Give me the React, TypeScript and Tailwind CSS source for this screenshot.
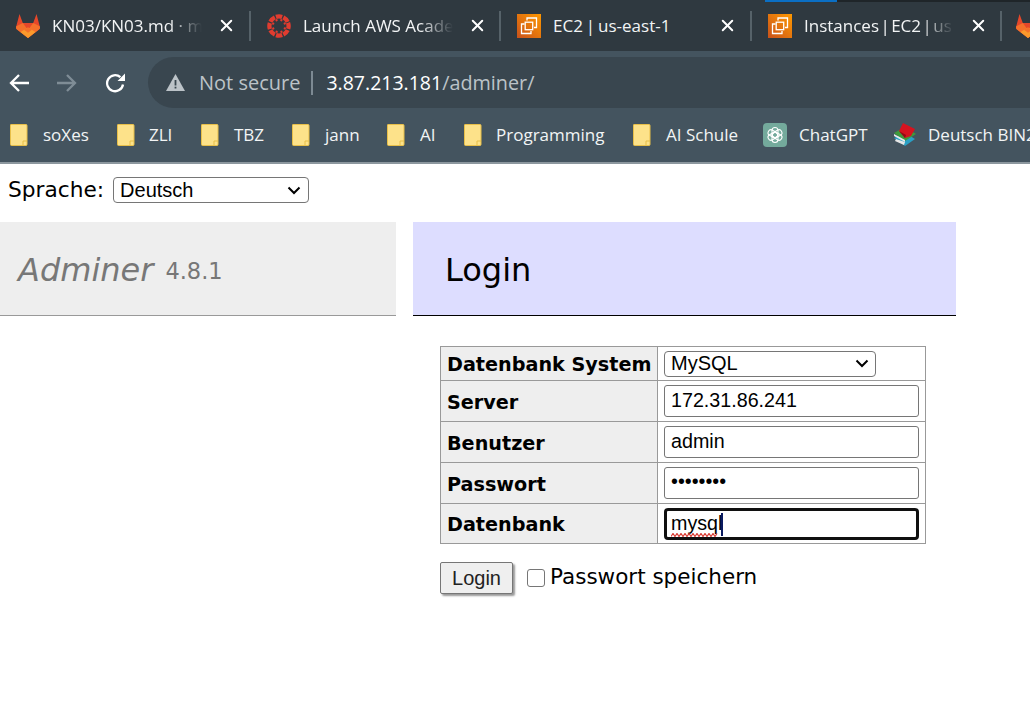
import { X } from "lucide-react";
import { ReactNode } from "react";

function GitlabIcon() {
  return (
    <svg width="24" height="24" viewBox="0 0 24 24" className="shrink-0">
      <path d="M12 24 1 15.600C0 14.800-.2 13.800.2 12.600L3.500 0l3.300 9h10.400l3.300-9 3.300 12.600c.4 1.200.2 2.200-.8 3z" fill="#e5472a" />
      <path d="M.3 12.200 6.800 9 12 16l5.200-7 6.500 3.200.1.400c.4 1.200.2 2.200-.8 3L12 24 1 15.600C0 14.800-.2 13.800.2 12.600z" fill="#f4702b" />
      <path d="M4.500 18 12 13.500 19.500 18 12 24z" fill="#fb9a2c" />
      <path d="M8 15.800 12 13.500l4 2.300-4 3z" fill="#f4702b" />
    </svg>
  );
}

function CanvasIcon() {
  const dots = [0, 45, 90, 135, 180, 225, 270, 315];
  return (
    <svg width="24" height="24" viewBox="0 0 25 25" className="shrink-0">
      <circle cx="12.500" cy="12.500" r="10" fill="none" stroke="#e13c2f" strokeWidth="4.500" strokeDasharray="6.500 1.350" transform="rotate(-20 12.500 12.500)" />
      {dots.map((a) => (
        <circle key={a} cx="12.500" cy="6" r="1.200" fill="#e13c2f" transform={`rotate(${a + 22} 12.500 12.500)`} />
      ))}
    </svg>
  );
}

function Ec2Icon({ id }: { id: string }) {
  return (
    <svg width="24" height="24" viewBox="0 0 24 24" className="shrink-0">
      <defs>
        <linearGradient id={id} x1="0" y1="1" x2="1" y2="0">
          <stop offset="0" stopColor="#c8511b" />
          <stop offset="1" stopColor="#ff9900" />
        </linearGradient>
      </defs>
      <rect width="24" height="24" fill={`url(#${id})`} />
      <g fill="none" stroke="#fff" strokeWidth="1.300">
        <path d="M10 6.500V4h9.500v9.500H17" />
        <path d="M7.500 10H4.500v9.500H14V17" />
        <rect x="8.200" y="8.200" width="7.500" height="7.500" />
      </g>
    </svg>
  );
}

function ChatGptIcon() {
  return (
    <svg width="24" height="24" viewBox="0 0 24 24" className="shrink-0">
      <rect width="24" height="24" rx="4" fill="#74aa9c" />
      <g fill="none" stroke="#fff" strokeWidth="1.100">
        {[0, 60, 120, 180, 240, 300].map((a) => (
          <rect key={a} x="9" y="4.500" width="6" height="10" rx="3" transform={`rotate(${a} 12 12)`} />
        ))}
      </g>
    </svg>
  );
}

function BooksIcon() {
  return (
    <svg width="24" height="24" viewBox="0 0 24 24" className="shrink-0">
      <path d="M1 15 12 10l10 6-10 7z" fill="#2a9fc4" />
      <path d="M2 18l9 4 1-3-9-3z" fill="#e6e6e6" />
      <path d="M1 10 12 4l11 7-11 7z" fill="#3f9a3a" />
      <path d="M1 11l11 6v2L1 13z" fill="#e8e8e8" />
      <path d="M6 8 10 0l12 6-4 7-6 2z" fill="#d5131f" />
      <path d="M6 8l6 7 1-3z" fill="#8f0d14" />
    </svg>
  );
}

function FolderIcon() {
  return (
    <svg width="18" height="22" viewBox="0 0 18 22" className="shrink-0">
      <path d="M1 .500h15a1 1 0 0 1 1 1v19a1 1 0 0 1-1 1H1.500a1 1 0 0 1-1-1V1a.5.5 0 0 1 .5-.5z" fill="#fde28a" stroke="#e8bf49" />
      <path d="M13 21v-4h4" fill="none" stroke="#e8bf49" />
    </svg>
  );
}

function Tab({
  icon,
  title,
  fade,
  width,
  spacing = "",
}: {
  icon: ReactNode;
  title: string;
  fade?: boolean;
  width: string;
  spacing?: string;
}) {
  return (
    <div className={`flex h-full shrink-0 items-center ${width}`}>
      <div className="flex flex-1 items-center pl-4">
        {icon}
        <span
          className={`ml-3 w-[150px] overflow-hidden text-[17px] whitespace-nowrap text-[#f2f4f5] ${spacing} ${
            fade ? "[mask-image:linear-gradient(to_right,black_78%,transparent_100%)]" : ""
          }`}
        >
          {title}
        </span>
        <X className="ml-[15px] text-white" size={19} strokeWidth={2.500} />
      </div>
      <div className="mt-[1px] h-[30px] w-[2px] shrink-0 bg-[#566269]" />
    </div>
  );
}

function Bookmark({ icon, label, width, gap = "ml-[15px]" }: { icon: ReactNode; label: string; width: string; gap?: string }) {
  return (
    <div className={`flex shrink-0 items-center ${width}`}>
      {icon}
      <span className={`${gap} text-[17px] whitespace-nowrap text-[#f2f4f5]`}>{label}</span>
    </div>
  );
}

function Row({ label, children, height }: { label: string; children: ReactNode; height: string }) {
  return (
    <tr className={height}>
      <th className="border border-[#999] bg-[#eee] pt-[4px] pl-[6px] text-left align-middle text-[19.200px] font-bold">
        {label}
      </th>
      <td className="border border-[#999] pl-[6px] align-middle">{children}</td>
    </tr>
  );
}

const inputClass =
  "block h-[32px] w-[255px] rounded-[3px] border border-[#767676] bg-white px-[6px] pb-[2px] font-['Liberation_Sans',sans-serif] text-[19.700px] text-black outline-none";

export default function App() {
  return (
    <div className="h-[712px] w-[1030px] overflow-hidden bg-white font-['DejaVu_Sans',sans-serif]">
      <div className="flex h-[164px] flex-col border-b-2 border-[#8c979e] font-['Open_Sans',sans-serif]">
        <div className="relative flex h-[51px] items-center bg-[#2f3940]">
          <Tab icon={<GitlabIcon />} title="KN03/KN03.md · m" fade width="w-[251px]" />
          <Tab icon={<CanvasIcon />} title="Launch AWS Acade" fade width="w-[250px]" />
          <Tab icon={<Ec2Icon id="ec2a" />} title="EC2 | us-east-1" width="w-[251px]" spacing="[word-spacing:-1.500px]" />
          <Tab icon={<Ec2Icon id="ec2b" />} title="Instances | EC2 | us" fade width="w-[250px]" spacing="[word-spacing:-3px]" />
          <div className="pl-[14px]">
            <GitlabIcon />
          </div>
          <div className="absolute top-0 left-[765px] h-[2px] w-[72px] bg-[#0b6fc4]" />
          <div className="absolute top-0 left-[837px] h-[2px] w-[193px] bg-[#1f2529]" />
        </div>
        <div className="flex h-[57px] items-center bg-[#44545f] pt-[6px]">
          <div className="flex w-[148px] shrink-0 items-center pl-[9px]">
            <svg width="20" height="18" viewBox="0 0 20 18" fill="none" stroke="#fff" strokeWidth="2.300">
              <path d="M20 9H2M10 1 2 9l8 8" />
            </svg>
            <svg width="20" height="18" viewBox="0 0 20 18" fill="none" stroke="#7f8d96" strokeWidth="2.300" className="ml-[28px]">
              <path d="M0 9h18M10 1l8 8-8 8" />
            </svg>
            <svg width="21" height="20" viewBox="0 0 21 20" fill="none" className="ml-[28px]">
              <path d="M18 11.500a8 8 0 1 1-2.600-7.300" stroke="#fff" strokeWidth="2.300" />
              <path d="M20 .500V8h-7.500z" fill="#fff" />
            </svg>
          </div>
          <div className="flex h-[51px] flex-1 items-center rounded-l-[26px] bg-[#39464f] pl-[18px] text-[20px]">
            <svg width="19" height="17" viewBox="0 0 19 17" className="shrink-0">
              <path d="M9.500 0 19 17H0z" fill="#bcc3c8" />
              <rect x="8.600" y="6" width="1.800" height="5.500" fill="#39464f" />
              <rect x="8.600" y="12.700" width="1.800" height="1.800" fill="#39464f" />
            </svg>
            <span className="ml-[14px] text-[#bcc3c8]">Not secure</span>
            <span className="ml-[11px] h-[24px] w-[2px] bg-[#7d8a93]" />
            <span className="ml-[13px] text-[19.500px] text-white">3.87.213.181</span>
            <span className="text-[19.800px] text-[#bcc3c8]">/adminer/</span>
          </div>
        </div>
        <div className="flex flex-1 items-center overflow-hidden bg-[#44545f] pl-[10px]">
          <Bookmark icon={<FolderIcon />} label="soXes" width="w-[107px]" />
          <Bookmark icon={<FolderIcon />} label="ZLI" width="w-[84px]" gap="ml-[14px]" />
          <Bookmark icon={<FolderIcon />} label="TBZ" width="w-[91px]" />
          <Bookmark icon={<FolderIcon />} label="jann" width="w-[95px]" />
          <Bookmark icon={<FolderIcon />} label="AI" width="w-[77px]" />
          <Bookmark icon={<FolderIcon />} label="Programming" width="w-[169px]" gap="ml-[14px]" />
          <Bookmark icon={<FolderIcon />} label="AI Schule" width="w-[130px]" />
          <Bookmark icon={<ChatGptIcon />} label="ChatGPT" width="w-[130px]" gap="ml-[12px]" />
          <Bookmark icon={<BooksIcon />} label="Deutsch BIN2" width="w-[200px]" gap="ml-[11px]" />
        </div>
      </div>

      <div className="flex h-[58px] items-start pt-[13px] pl-[8px] text-black">
        <span className="text-[21.700px] leading-[26px]">Sprache:</span>
        <div className="ml-[9px] flex h-[26px] w-[196px] items-center justify-between rounded-[4px] border border-[#767676] pr-[7px] pl-[6px] font-['Liberation_Sans',sans-serif] text-[20px]">
          Deutsch
          <svg width="14" height="9" viewBox="0 0 14 9">
            <path d="M1.500 1.500 7 7l5.500-5.500" fill="none" stroke="#000" strokeWidth="2" />
          </svg>
        </div>
      </div>

      <div className="flex h-[94px]">
        <div className="flex w-[396px] items-center border-b border-[#999] bg-[#eee] pt-[2px] pl-[18px] text-[#777]">
          <span className="text-[32px] italic">Adminer</span>
          <span className="ml-[12px] pt-[5px] text-[22.500px]">4.8.1</span>
        </div>
        <div className="ml-[17px] flex w-[543px] items-center border-b border-black bg-[#ddf] pt-[3px] pl-[32px] text-[32px] text-black">
          Login
        </div>
      </div>

      <div className="pt-[30px] pl-[440px]">
        <table className="w-[486px] border-collapse text-black">
          <tbody>
            <tr className="h-[34px]">
              <th className="w-[217px] border border-[#999] bg-[#eee] pt-[3px] pl-[6px] text-left align-middle text-[19.200px] font-bold">
                Datenbank System
              </th>
              <td className="border border-[#999] pl-[6px] align-middle">
                <div className="flex h-[26px] w-[212px] items-center justify-between rounded-[4px] border border-[#767676] pr-[6px] pb-[1px] pl-[6px] font-['Liberation_Sans',sans-serif] text-[20px]">
                  MySQL
                  <svg width="14" height="9" viewBox="0 0 14 9">
                    <path d="M1.500 1.500 7 7l5.500-5.500" fill="none" stroke="#000" strokeWidth="2" />
                  </svg>
                </div>
              </td>
            </tr>
            <Row label="Server" height="h-[41px]">
              <input readOnly value="172.31.86.241" className={inputClass} />
            </Row>
            <Row label="Benutzer" height="h-[41px]">
              <input readOnly value="admin" className={inputClass} />
            </Row>
            <Row label="Passwort" height="h-[41px]">
              <input readOnly type="password" value="12345678" className={`${inputClass} pb-[4px]`} />
            </Row>
            <Row label="Datenbank" height="h-[40px]">
              <div className="relative">
                <input
                  readOnly
                  value="mysql"
                  className="block h-[32px] w-[255px] rounded-[4px] border-[3px] border-[#101010] bg-white px-[4px] pb-[1px] font-['Liberation_Sans',sans-serif] text-[19.700px] text-black outline-none"
                />
                <span className="absolute top-[5px] left-[57px] h-[23px] w-[2px] bg-[#0a1a60]" />
                <svg width="52" height="4" viewBox="0 0 52 4" className="absolute top-[25px] left-[7px]">
                  <path d="M0 3.500 2 .5l2 3 2-3 2 3 2-3 2 3 2-3 2 3 2-3 2 3 2-3 2 3 2-3 2 3 2-3 2 3 2-3 2 3 2-3 2 3 2-3 2 3 2-3" fill="none" stroke="#d93a32" strokeWidth="1.200" />
                </svg>
              </div>
            </Row>
          </tbody>
        </table>
        <div className="mt-[17px] flex items-center text-black">
          <button className="h-[32px] w-[73px] rounded-[2px] border border-[#767676] bg-[#efefef] pb-[4px] font-['Liberation_Sans',sans-serif] text-[20px] text-[#222] shadow-[2px_2px_2px_#999]">
            Login
          </button>
          <span className="ml-[14px] h-[18px] w-[18px] rounded-[3px] border border-[#767676]" />
          <span className="ml-[5px] pb-[2px] text-[21.500px]">Passwort speichern</span>
        </div>
      </div>
    </div>
  );
}
